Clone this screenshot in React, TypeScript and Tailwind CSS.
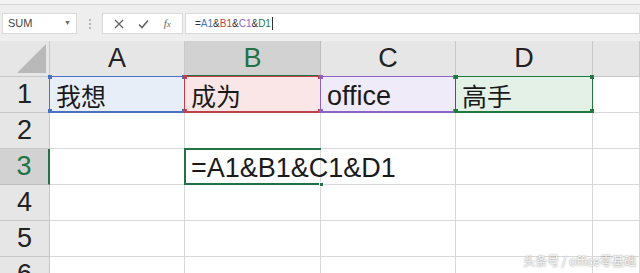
import React from 'react';

const cols = [
    { key: 'A', w: 'w-[135px]' },
    { key: 'B', w: 'w-[136px]' },
    { key: 'C', w: 'w-[135px]' },
    { key: 'D', w: 'w-[137px]' },
    { key: 'E', w: 'flex-1' },
];

const font = { fontFamily: '"Liberation Sans", "Noto Sans CJK SC", sans-serif' };

type Ref = { border: string; bg: string; dot: string };

const refs: Record<string, Ref> = {
    A1: { border: 'border-[#4a72c2]', bg: 'bg-[#e8eef8]', dot: 'bg-[#4a72c2]' },
    B1: { border: 'border-[#c0404a]', bg: 'bg-[#fae6e6]', dot: 'bg-[#c0404a]' },
    C1: { border: 'border-[#8a63c9]', bg: 'bg-[#f0ebf8]', dot: 'bg-[#8a63c9]' },
    D1: { border: 'border-[#1f7a3e]', bg: 'bg-[#e3f1e6]', dot: 'bg-[#1f7a3e]' },
};

const values: Record<string, string> = {
    A1: '我想',
    B1: '成为',
    C1: 'office',
    D1: '高手',
};

function Corners({ color }: { color: string }) {
    return (
        <>
            <span className={`absolute -left-[2px] -top-[2px] w-[4px] h-[4px] ${color}`} />
            <span className={`absolute -right-[2px] -top-[2px] w-[4px] h-[4px] ${color}`} />
            <span className={`absolute -left-[2px] -bottom-[2px] w-[4px] h-[4px] ${color}`} />
            <span className={`absolute -right-[2px] -bottom-[2px] w-[4px] h-[4px] ${color}`} />
        </>
    );
}

function Cell({ id, w }: { id: string; w: string }) {
    const r = refs[id];
    const active = id === 'B3';
    const latin = id === 'C1';
    return (
        <div className={`relative h-full ${w} border-r border-b border-[#d9d9d9] ${r ? r.bg : 'bg-white'}`}>
            {values[id] && (
                <span
                    className={`absolute left-[6px] bottom-[2px] ${latin ? 'text-[27px]' : 'text-[25px]'} leading-none text-[#1a1a1a] whitespace-nowrap`}
                    style={font}
                >
                    {values[id]}
                </span>
            )}
            {r && (
                <div className={`absolute -left-px -top-px -right-px -bottom-px border ${r.border} border-b-2 z-10`}>
                    <Corners color={r.dot} />
                </div>
            )}
            {active && (
                <>
                    <span className="absolute left-[6px] bottom-[2px] text-[27px] leading-none text-[#1a1a1a] whitespace-nowrap z-20" style={font}>
                        =A1&amp;B1&amp;C1&amp;D1
                    </span>
                    <div className="absolute -left-px -top-px -right-px -bottom-px border-2 border-r-0 border-[#217346] z-10">
                        <span className="absolute -right-[3px] -bottom-[4px] w-[5px] h-[5px] bg-[#217346] border border-white" />
                    </div>
                </>
            )}
        </div>
    );
}

function App() {
    const rows = [1, 2, 3, 4, 5, 6];
    return (
        <div className="w-[640px] h-[273px] overflow-hidden bg-white relative" style={{ fontFamily: '"Liberation Sans", "Noto Sans CJK SC", sans-serif' }}>
            {/* ribbon remnant */}
            <div className="h-[5px] bg-[#f3f3f3] border-b border-[#d6d6d6]" />
            {/* formula bar */}
            <div className="h-[36px] bg-[#eeeeee] flex items-start pt-[8px] gap-0">
                <div className="ml-[2px] w-[75px] h-[21px] bg-white border border-[#dadada] flex items-center justify-between px-[5px]">
                    <span className="text-[11px] text-[#444]">SUM</span>
                    <span className="text-[7px] text-[#666]">▼</span>
                </div>
                <div className="w-[25px] h-[21px] flex items-center justify-center">
                    <span className="flex flex-col gap-[2px]">
                        <span className="w-[2px] h-[2px] bg-[#b5b5b5]" />
                        <span className="w-[2px] h-[2px] bg-[#b5b5b5]" />
                        <span className="w-[2px] h-[2px] bg-[#b5b5b5]" />
                    </span>
                </div>
                <div className="w-[81px] h-[21px] bg-white border border-[#dadada] flex items-center justify-around px-[4px] text-[#666]">
                    <svg width="10" height="10" viewBox="0 0 10 10"><path d="M1 1 L9 9 M9 1 L1 9" stroke="#666" strokeWidth="1.3" /></svg>
                    <svg width="11" height="10" viewBox="0 0 11 10"><path d="M1 5.5 L4 8.5 L10 1.5" stroke="#666" strokeWidth="1.6" fill="none" /></svg>
                    <span className="text-[11px] italic" style={{ fontFamily: '"Liberation Serif", serif' }}>f<span className="text-[9px]">x</span></span>
                </div>
                <div className="ml-[2px] flex-1 h-[21px] bg-white border border-[#dadada] flex items-center pl-[9px] text-[10px]">
                    <span className="text-[#333]">=</span>
                    <span className="text-[#4a72c2]">A1</span>
                    <span className="text-[#333]">&amp;</span>
                    <span className="text-[#c0404a]">B1</span>
                    <span className="text-[#333]">&amp;</span>
                    <span className="text-[#8a63c9]">C1</span>
                    <span className="text-[#333]">&amp;</span>
                    <span className="text-[#1f7a3e]">D1</span>
                    <span className="w-px h-[13px] bg-[#333] ml-[1px]" />
                </div>
            </div>
            {/* column headers */}
            <div className="flex h-[36px] bg-[#e6e6e6]">
                <div className="w-[50px] h-full relative border-r border-b border-[#c8c8c8]">
                    <svg className="absolute right-[3px] bottom-[3px]" width="29" height="29" viewBox="0 0 29 29"><path d="M29 0 L29 29 L0 29 Z" fill="#b9b9b9" /></svg>
                </div>
                {cols.map((c) => (
                    <div
                        key={c.key}
                        className={`${c.w} h-full flex items-center justify-center text-[27px] border-r ${c.key === 'B' ? 'bg-[#d2d2d2] text-[#217346] border-b-2 border-b-[#217346] border-r-[#bdbdbd]' : 'text-[#222] border-b border-[#c8c8c8]'}`}
                        style={font}
                    >
                        {c.key !== 'E' ? c.key : ''}
                    </div>
                ))}
            </div>
            {/* rows */}
            {rows.map((r) => (
                <div key={r} className="flex h-[36px]">
                    <div
                        className={`w-[50px] h-full flex items-center justify-center text-[27px] border-b ${r === 3 ? 'bg-[#d2d2d2] text-[#217346] border-r-2 border-r-[#217346] border-b-[#bdbdbd]' : 'bg-[#e6e6e6] text-[#222] border-r border-[#c8c8c8]'}`}
                        style={font}
                    >
                        {r}
                    </div>
                    {cols.map((c) => (
                        <Cell key={c.key} id={`${c.key}${r}`} w={c.w} />
                    ))}
                </div>
            ))}
            {/* watermark */}
            <span className="absolute right-[4px] bottom-[3px] text-[12px] text-[#f4f4f4] z-30" style={{ textShadow: '0 0 2px #777', fontFamily: '"Noto Sans CJK SC", sans-serif' }}>
                头条号 / office零基础
            </span>
        </div>
    );
}

export default App;
